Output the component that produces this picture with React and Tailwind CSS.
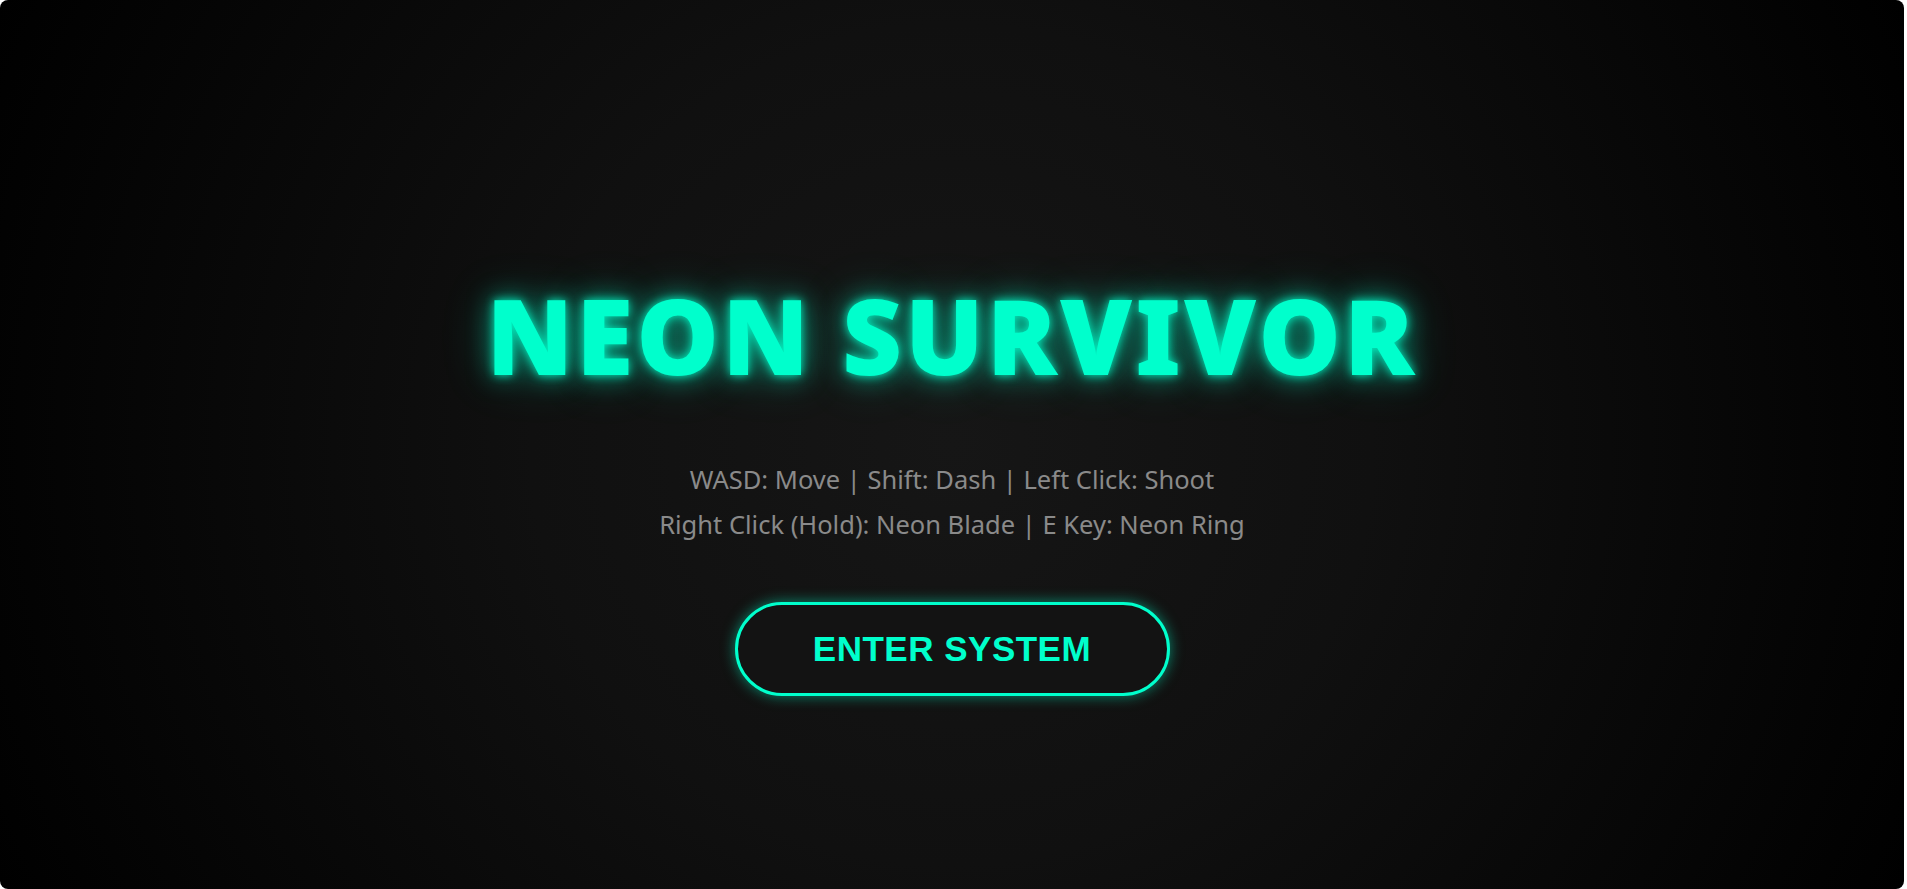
export default function App() {
  return (
    <div className="w-[1907px] h-[889px] bg-white">
      <div className="w-[1904px] h-[889px] pt-[90px] rounded-lg overflow-hidden bg-[radial-gradient(circle,#161616_0%,#101010_40%,#000000_100%)] flex flex-col items-center justify-center">
        <h1 className="font-['Noto_Sans','Open_Sans',sans-serif] text-[#00ffcc] font-black text-[104px] leading-none tracking-[3px] [text-shadow:0_0_10px_rgba(0,255,204,0.9),0_0_26px_rgba(0,255,204,0.55),0_0_50px_rgba(0,255,204,0.3)]">
          NEON SURVIVOR
        </h1>
        <div className="mt-[70px] font-['Noto_Sans','Open_Sans',sans-serif] text-center text-[#8a8a8a] text-[25.5px] leading-[45px]">
          <p>WASD: Move | Shift: Dash | Left Click: Shoot</p>
          <p>Right Click (Hold): Neon Blade | E Key: Neon Ring</p>
        </div>
        <button className="mt-[55px] w-[435px] h-[94px] rounded-full border-[3px] border-[#00ffcc] bg-[#131313] font-['Liberation_Sans',Arial,sans-serif] text-[#00ffcc] font-bold text-[35px] tracking-[0.5px] shadow-[0_0_14px_rgba(0,255,204,0.5)]">
          ENTER SYSTEM
        </button>
      </div>
    </div>
  )
}
